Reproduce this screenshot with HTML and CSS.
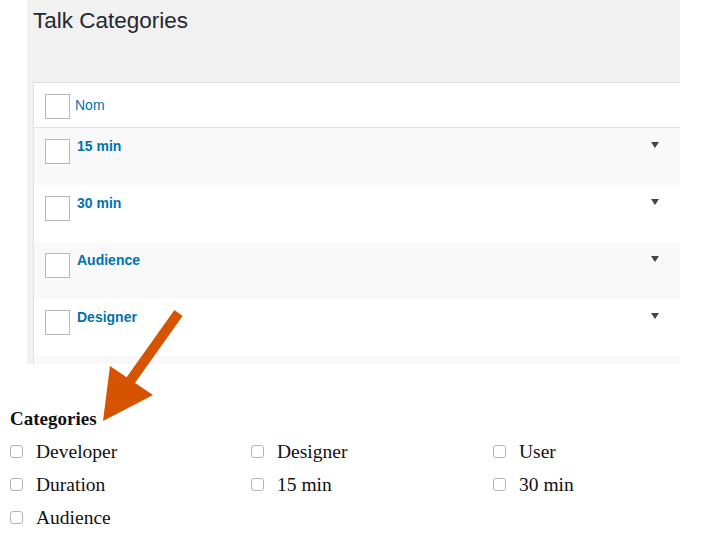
FILE: index.html
```html
<!DOCTYPE html>
<html>
<head>
<meta charset="utf-8">
<link rel="stylesheet" href="styles.css">
</head>
<body>
<div class="panel">
  <h1 class="title">Talk Categories</h1>
  <div class="table">
    <div class="row head">
      <span class="cb"></span>
      <span class="col-name">Nom</span>
    </div>
    <div class="row alt">
      <span class="cb"></span>
      <span class="name">15 min</span>
      <span class="toggle"></span>
    </div>
    <div class="row">
      <span class="cb"></span>
      <span class="name">30 min</span>
      <span class="toggle"></span>
    </div>
    <div class="row alt">
      <span class="cb"></span>
      <span class="name">Audience</span>
      <span class="toggle"></span>
    </div>
    <div class="row">
      <span class="cb"></span>
      <span class="name">Designer</span>
      <span class="toggle"></span>
    </div>
    <div class="row alt"></div>
  </div>
</div>

<div class="cats">
  <h2 class="cats-title">Categories</h2>
  <div class="cats-grid">
    <label class="item"><span class="box"></span>Developer</label>
    <label class="item"><span class="box"></span>Designer</label>
    <label class="item"><span class="box"></span>User</label>
    <label class="item"><span class="box"></span>Duration</label>
    <label class="item"><span class="box"></span>15 min</label>
    <label class="item"><span class="box"></span>30 min</label>
    <label class="item"><span class="box"></span>Audience</label>
  </div>
</div>

<svg class="arrow" width="724" height="552" viewBox="0 0 724 552">
  <line x1="178.5" y1="313" x2="128" y2="384" stroke="#d65300" stroke-width="10"/>
  <polygon points="110,366 153,395 103,421" fill="#d65300"/>
</svg>
</body>
</html>
```

FILE: styles.css
```css
* { box-sizing: border-box; }
html, body { margin: 0; padding: 0; background: #fff; }
body { position: relative; width: 724px; height: 552px; overflow: hidden; }

.panel {
  margin-left: 27px;
  width: 653px;
  height: 364px;
  overflow: hidden;
  background: #f1f1f1;
  padding: 6px 0 0 6px;
}
.title {
  margin: 0 0 46px 0;
  font-family: "Liberation Sans", Arial, sans-serif;
  font-weight: 400;
  font-size: 22.5px;
  line-height: 30px;
  color: #23282d;
}
.table {
  width: 647px;
  border-left: 1px solid #e1e1e1;
  border-top: 1px solid #e1e1e1;
  font-family: "Liberation Sans", Arial, sans-serif;
  font-size: 14px;
  line-height: 20px;
}
.row {
  display: flex;
  align-items: flex-start;
  height: 57px;
  padding: 11px 21px 0 11px;
  background: #fff;
}
.row.alt { background: #f9f9f9; }
.row.head {
  height: 45px;
  border-bottom: 1px solid #e1e1e1;
}
.cb {
  width: 25px;
  height: 25px;
  flex: none;
  background: #fff;
  border: 1px solid #b4b9be;
}
.col-name {
  margin: 1px 0 0 5px;
  color: #0073aa;
}
.name {
  margin: -3px 0 0 7px;
  font-weight: 700;
  color: #0073aa;
}
.toggle {
  margin-left: auto;
  margin-top: 3px;
  width: 0;
  height: 0;
  border-left: 4px solid transparent;
  border-right: 4px solid transparent;
  border-top: 6px solid #444;
}

.cats {
  padding: 43px 0 0 10px;
  font-family: "Liberation Serif", "Times New Roman", serif;
  color: #111;
}
.cats-title {
  margin: 0 0 4px 0;
  font-size: 19px;
  line-height: 24px;
  font-weight: 700;
}
.cats-grid {
  display: grid;
  grid-template-columns: 241px 242px 1fr;
}
.item {
  display: flex;
  align-items: center;
  height: 33px;
  font-size: 19.5px;
  line-height: 33px;
}
.box {
  width: 13px;
  height: 13px;
  flex: none;
  margin: 0 13px 0 0;
  border: 1px solid #b5b5b5;
  border-radius: 3px;
  background: #fff;
}

.arrow {
  position: absolute;
  left: 0;
  top: 0;
  pointer-events: none;
}
```
